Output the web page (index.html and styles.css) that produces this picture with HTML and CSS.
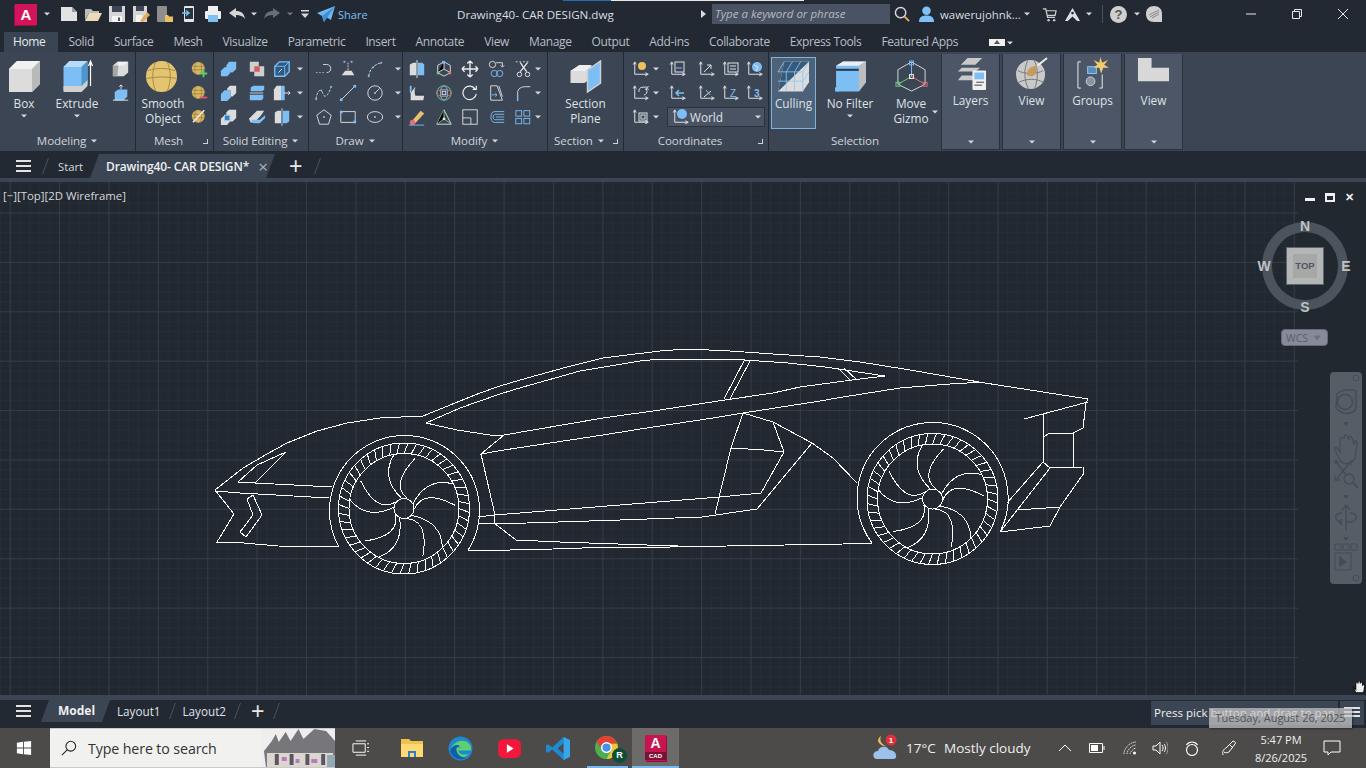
FILE: index.html
```html
<!DOCTYPE html>
<html lang="en">
<head>
<meta charset="utf-8">
<title>Drawing40- CAR DESIGN.dwg</title>
<link rel="stylesheet" href="styles.css">
</head>
<body>
<svg class="defs" aria-hidden="true">
  <symbol id="ucs" viewBox="0 0 24 24"><path d="M5 3V19H22M3 6L5 2.500L7 6M19 17L23 19L19 21" fill="none" stroke="#dfe3e8" stroke-width="1.300"/></symbol>
  <symbol id="ball" viewBox="0 0 24 24"><circle cx="11" cy="11" r="8.500" fill="#d8b763"/><path d="M3 8.500H19M2.500 13H19.500M8 3C6 8 6 15 8 19M14 3C16 8 16 15 14 19" stroke="#8f7434" fill="none" stroke-width=".8"/></symbol>
  <symbol id="chev" viewBox="0 0 8 8"><path d="M1 2.500H7L4 5.500Z" fill="#d5d8dc"/></symbol>
</svg>

<header class="titlebar">
  <div class="progress"><i class="pb"></i><i class="pw"></i></div>
  <div class="quick">
    <div class="logo">A</div>
    <span class="qa qa-logo"><svg class="c8"><use href="#chev"/></svg></span>
    <span class="qc"><svg viewBox="0 0 18 16" class="i18"><path d="M1 1H12L17 6V15H1Z" fill="#e3e3e3"/><path d="M12 1V6H17Z" fill="#9b9b9b"/></svg></span>
    <span class="qc"><svg viewBox="0 0 18 16" class="i18"><path d="M1 14V3H7L9 5H15V7H5L1 14Z" fill="#bbb"/><path d="M1 15L5 7H18L14 15Z" fill="#eadbb6"/></svg></span>
    <span class="qc"><svg viewBox="0 0 18 18" class="i18"><path d="M1 1H17V17H1Z" fill="#d5d5d5"/><path d="M4 1H14V7H4Z" fill="#3d4655"/><path d="M4 11H14V17H4Z" fill="#f4f4f4"/><path d="M10 12.500H12V16H10Z" fill="#555"/></svg></span>
    <span class="qc"><svg viewBox="0 0 18 18" class="i18"><path d="M1 1H15V17H1Z" fill="#d5d5d5"/><path d="M4 1H12V6H4Z" fill="#3d4655"/><path d="M4 10H10V17H4Z" fill="#f4f4f4"/><path d="M8 16L15 7L18 10L11 17Z" fill="#e5a95a"/></svg></span>
    <span class="qc"><svg viewBox="0 0 18 18" class="i18"><rect x="1" y="1" width="10" height="16" rx="1" fill="#8e8e8e"/><path d="M9 10H12L13 11.500H17V17H9Z" fill="#e8c05f"/></svg></span>
    <span class="qc"><svg viewBox="0 0 18 18" class="i18"><rect x="4" y="1" width="10" height="16" rx="1" fill="#e5e5e5"/><rect x="5" y="3" width="8" height="11" fill="#2a3340"/><path d="M2 8H8M6 5.500L9 8L6 10.500" stroke="#7ac0f7" stroke-width="1.500" fill="none"/></svg></span>
    <span class="qc"><svg viewBox="0 0 18 18" class="i18"><path d="M4 1H14V6H4Z" fill="#f0f0f0"/><rect x="1" y="6" width="16" height="8" rx="1" fill="#eee"/><path d="M4 10H14V17H4Z" fill="#7fc0f3"/></svg></span>
    <span class="qc"><svg viewBox="0 0 18 14" class="i18"><path d="M1 6L8 1V4C13 4 16 6 17 12C15 9 12 8 8 8V11Z" fill="#d5d5d5"/></svg></span>
    <span class="qa qa-s"><svg class="c8"><use href="#chev"/></svg></span>
    <span class="qc qc-r"><svg viewBox="0 0 18 14" class="i18"><path d="M17 6L10 1V4C5 4 2 6 1 12C3 9 6 8 10 8V11Z" fill="#666e78"/></svg></span>
    <span class="qa qa-s"><svg class="c8 dim"><use href="#chev"/></svg></span>
    <span class="qa qa-m"><svg viewBox="0 0 10 10" class="i10"><path d="M1 1H9V2.500H1ZM1 4.500H9L5 9Z" fill="#d5d8dc"/></svg></span>
    <svg viewBox="0 0 20 18" class="plane"><path d="M19 1L1 8L6 11L8 17L11 12.500L15 15Z" fill="#6fb6f2"/><path d="M19 1L6 11L8 17Z" fill="#3f8fd0"/></svg>
    <span class="share">Share</span>
  </div>
  <div class="doc">Drawing40- CAR DESIGN.dwg</div>
  <div class="search-arrow"></div>
  <div class="search">Type a keyword or phrase</div>
  <svg viewBox="0 0 18 18" class="lens"><circle cx="7" cy="7" r="5.500" fill="none" stroke="#d9d9d9" stroke-width="1.500"/><path d="M11 11L16 16" stroke="#d9b36a" stroke-width="2"/></svg>
  <svg viewBox="0 0 18 18" class="user"><circle cx="9" cy="5" r="4.500" fill="#7fc2f7"/><path d="M1 17C1 11 5 10 9 10S17 11 17 17Z" fill="#7fc2f7"/></svg>
  <span class="uname">wawerujohnk...</span>
  <span class="qa qa-u"><svg class="c8"><use href="#chev"/></svg></span>
  <svg viewBox="0 0 16 16" class="cart"><path d="M1 2H4L6 11H14M4.500 4H15L14 9H5.500" fill="none" stroke="#cfcfcf" stroke-width="1.300"/><circle cx="7" cy="14" r="1.300" fill="#cfcfcf"/><circle cx="13" cy="14" r="1.300" fill="#cfcfcf"/></svg>
  <svg viewBox="0 0 18 16" class="alogo"><path d="M9 1L1 15H4L9 10L14 15H17Z" fill="#e0e0e0"/><circle cx="9" cy="6.500" r="1.400" fill="#222933"/></svg>
  <span class="qa qa-a"><svg class="c8"><use href="#chev"/></svg></span>
  <i class="vsep"></i>
  <div class="help">?</div>
  <span class="qa qa-h"><svg class="c8"><use href="#chev"/></svg></span>
  <svg viewBox="0 0 16 16" class="cloudb"><path d="M8 0C13 0 16 3 16 8V16H8C3 16 0 13 0 8S3 0 8 0Z" fill="#cfcfcf"/><path d="M3 9L13 4M4 11L13 6M6 12L13 8" stroke="#777" stroke-width=".8"/></svg>
  <div class="winbtns">
    <svg viewBox="0 0 12 12" class="w12"><path d="M1 6H11" stroke="#e6e6e6"/></svg>
    <svg viewBox="0 0 12 12" class="w12"><path d="M1.500 3.500H8.500V10.500H1.500ZM3.500 3.500V1.500H10.500V8.500H8.500" fill="none" stroke="#e6e6e6"/></svg>
    <svg viewBox="0 0 12 12" class="w12"><path d="M1 1L11 11M11 1L1 11" stroke="#e6e6e6"/></svg>
  </div>
</header>

<nav class="tabs">
  <span class="tab on">Home</span><span class="tab">Solid</span><span class="tab">Surface</span><span class="tab">Mesh</span><span class="tab">Visualize</span><span class="tab">Parametric</span><span class="tab">Insert</span><span class="tab">Annotate</span><span class="tab">View</span><span class="tab">Manage</span><span class="tab">Output</span><span class="tab">Add-ins</span><span class="tab">Collaborate</span><span class="tab">Express Tools</span><span class="tab">Featured Apps</span>
  <span class="collapse"><i></i></span><svg class="c8"><use href="#chev"/></svg>
</nav>

<section class="ribbon">
  <div class="panel p-model">
    <div class="body">
      <div class="big b-box"><svg viewBox="0 0 33 33" class="i33"><path d="M1 9L9 1H32V24L24 32H1Z" fill="#dcdcdc"/><path d="M24 9H1L9 1H32Z" fill="#f1f1f1"/><path d="M24 9L32 1V24L24 32Z" fill="#b9b9b9"/></svg><span>Box</span><svg class="c8 ba"><use href="#chev"/></svg></div>
      <div class="big b-ext"><svg viewBox="0 0 30 33" class="i33"><path d="M1 7L7 1H25V24L19 30H1Z" fill="#7dbef5"/><path d="M19 7H1L7 1H25Z" fill="#b6dcfa"/><path d="M19 7L25 1V24L19 30Z" fill="#4f95d0"/><path d="M1 26H19L25 20V26L19 32H1Z" fill="#d0d0d0"/><path d="M28 26V2M26 6L28 1L30 6" stroke="#fff" fill="none" stroke-width="1.200"/></svg><span>Extrude</span><svg class="c8 ba"><use href="#chev"/></svg></div>
      <div class="col">
        <span class="s"><svg viewBox="0 0 20 20" class="i20"><path d="M1 6L6 2H18V14L13 18H1Z" fill="#dcdcdc"/><path d="M1 6V18H6L7 6Z" fill="#a5a5a5"/><path d="M6 2H18L13 6H7Z" fill="#f1f1f1"/></svg></span>
        <span class="s"><svg viewBox="0 0 20 20" class="i20"><path d="M3 9L7 6H17V14L13 18H3Z" fill="#7dbef5"/><path d="M10 6V1M8 3L10 1L12 3M1 18H18" stroke="#e8e8e8" fill="none"/></svg></span>
      </div>
    </div>
    <div class="plabel">Modeling <svg class="c8"><use href="#chev"/></svg></div>
  </div>

  <div class="panel p-mesh">
    <div class="body">
      <div class="big b-smooth"><svg viewBox="0 0 34 34" class="i33"><circle cx="17" cy="17" r="16" fill="#e3c470"/><path d="M3 11C12 8 22 8 31 11M1.500 19C12 17 22 17 32.500 19M11 2C7 12 7 22 11 32M23 2C27 12 27 22 23 32" stroke="#a88a3f" fill="none"/></svg><span>Smooth<br>Object</span></div>
      <div class="col">
        <span class="s"><svg class="i20" viewBox="0 0 24 24"><use href="#ball"/><path d="M13 18H23M18 13V23" stroke="#5ccb6c" stroke-width="2.500"/></svg></span>
        <span class="s"><svg class="i20" viewBox="0 0 24 24"><use href="#ball"/><path d="M13 18H23" stroke="#e0576a" stroke-width="2.500"/></svg></span>
        <span class="s"><svg class="i20" viewBox="0 0 24 24"><use href="#ball"/><path d="M4 19L19 3" stroke="#eee" stroke-width="2"/></svg></span>
      </div>
    </div>
    <div class="plabel pl-mesh">Mesh <i class="launch"></i></div>
  </div>

  <div class="panel p-solid">
    <div class="body grid g-solid">
      <span class="s"><svg class="i20" viewBox="0 0 20 20"><path d="M1 12L5 8H11V15L8 18H1ZM7 6L10 2H18V10L14 14H11V8H7Z" fill="#7dbef5"/></svg></span>
      <span class="s"><svg class="i20" viewBox="0 0 20 20"><path d="M2 2H12V7H18V18H7V13H2Z" fill="#cfcfcf"/><path d="M7 7H13V13H7Z" fill="#d95a5a"/></svg></span>
      <span class="s"><svg class="i20" viewBox="0 0 20 20"><path d="M2 7L7 2H18V13L13 18H2Z" fill="#2f5a82" stroke="#7dbef5" stroke-width="1.500"/><path d="M2 7H13V18M13 7L18 2" stroke="#7dbef5" fill="none"/><path d="M6 14L10 10" stroke="#eee"/></svg></span>
      <span class="s"><svg class="c8"><use href="#chev"/></svg></span>
      <span class="s"><svg class="i20" viewBox="0 0 20 20"><path d="M1 11L5 7H12V15L8 19H1Z" fill="#7dbef5"/><path d="M8 5L11 2H18V10L14 14H12V7H8Z" fill="#dcdcdc"/></svg></span>
      <span class="s"><svg class="i20" viewBox="0 0 20 20"><path d="M3 4L6 2H18V6L16 8H3Z" fill="#7dbef5"/><path d="M2 10H17" stroke="#dcdcdc"/><path d="M2 12H17V16L15 18H2Z" fill="#7dbef5"/></svg></span>
      <span class="s"><svg class="i20" viewBox="0 0 20 20"><path d="M1 6L4 2H9V18H1Z" fill="#dcdcdc"/><path d="M9 2H13V18H9Z" fill="#7dbef5"/><path d="M12 10H19M17 8L19 10L17 12" stroke="#eee" fill="none"/></svg></span>
      <span class="s"><svg class="c8"><use href="#chev"/></svg></span>
      <span class="s"><svg class="i20" viewBox="0 0 20 20"><path d="M7 5L10 2H18V11L14 15H11V8H7ZM1 12L5 8H11V15L8 19H1Z" fill="#dcdcdc"/><rect x="5" y="8" width="6" height="6" fill="#3b7fb8" stroke="#9ed0f7"/></svg></span>
      <span class="s"><svg class="i20" viewBox="0 0 20 20"><path d="M1 12L10 3H18L14 9L7 16H3Z" fill="#dcdcdc"/><path d="M3 13H13L19 8V11L13 17H6Z" fill="#7dbef5"/></svg></span>
      <span class="s"><svg class="i20" viewBox="0 0 20 20"><path d="M2 5L5 3H9V17H2Z" fill="#dcdcdc"/><path d="M11 3H18V15L15 17H11Z" fill="#7dbef5"/><path d="M10 0V20" stroke="#9ed0f7"/></svg></span>
      <span class="s"><svg class="c8"><use href="#chev"/></svg></span>
    </div>
    <div class="plabel">Solid Editing <svg class="c8"><use href="#chev"/></svg></div>
  </div>

  <div class="panel p-draw">
    <div class="body grid g-draw">
      <span class="s"><svg class="i20" viewBox="0 0 20 20"><path d="M9 5H13C19 5 19 14 13 14" fill="none" stroke="#dfe3e8"/><path d="M1 14H10" fill="none" stroke="#7dbef5" stroke-dasharray="2 1.500"/></svg></span>
      <span class="s"><svg class="i20" viewBox="0 0 20 20"><path d="M3 17H17L14 12H7Z" fill="#dcdcdc"/><path d="M10 3V13" stroke="#dcdcdc" stroke-dasharray="2 1"/><rect x="5" y="1" width="2" height="2" fill="#7dbef5"/><rect x="13" y="1" width="2" height="2" fill="#7dbef5"/></svg></span>
      <span class="s"><svg class="i20" viewBox="0 0 20 20"><path d="M3 18C4 10 9 5 17 3" fill="none" stroke="#dfe3e8" stroke-dasharray="3 1.500"/><circle cx="3" cy="18" r="1.100" fill="#7dbef5"/><circle cx="17" cy="3" r="1.100" fill="#7dbef5"/><circle cx="8" cy="8" r="1.100" fill="#7dbef5"/></svg></span>
      <span class="s"><svg class="c8"><use href="#chev"/></svg></span>
      <span class="s"><svg class="i20" viewBox="0 0 20 20"><path d="M1 17C3 5 7 5 9 11S15 12 18 3" fill="none" stroke="#dfe3e8" stroke-dasharray="3 1.500"/><circle cx="1.500" cy="17" r="1" fill="#7dbef5"/><circle cx="18" cy="3" r="1" fill="#7dbef5"/><circle cx="7" cy="7" r="1" fill="#7dbef5"/></svg></span>
      <span class="s"><svg class="i20" viewBox="0 0 20 20"><path d="M3 17L17 3" stroke="#dfe3e8"/><rect x="1" y="16" width="3" height="3" fill="#7dbef5"/><rect x="16" y="1" width="3" height="3" fill="#7dbef5"/></svg></span>
      <span class="s"><svg class="i20" viewBox="0 0 20 20"><circle cx="10" cy="10" r="8" fill="none" stroke="#dfe3e8"/><path d="M10 10L15 5" stroke="#dfe3e8"/><circle cx="10" cy="10" r="1.200" fill="#7dbef5"/></svg></span>
      <span class="s"><svg class="c8"><use href="#chev"/></svg></span>
      <span class="s"><svg class="i20" viewBox="0 0 20 20"><path d="M10 2L18 8L15 18H5L2 8Z" fill="none" stroke="#dfe3e8"/><circle cx="10" cy="10" r="1.200" fill="#7dbef5"/></svg></span>
      <span class="s"><svg class="i20" viewBox="0 0 20 20"><path d="M2 4H18V16H2Z" fill="none" stroke="#dfe3e8"/><rect x="1" y="3" width="3" height="3" fill="#7dbef5"/><rect x="16" y="14" width="3" height="3" fill="#7dbef5"/></svg></span>
      <span class="s"><svg class="i20" viewBox="0 0 20 20"><ellipse cx="10" cy="10" rx="8.500" ry="6" fill="none" stroke="#dfe3e8"/><circle cx="10" cy="10" r="1.200" fill="#7dbef5"/></svg></span>
      <span class="s"><svg class="c8"><use href="#chev"/></svg></span>
    </div>
    <div class="plabel">Draw <svg class="c8"><use href="#chev"/></svg></div>
  </div>

  <div class="panel p-modify">
    <div class="body grid g-modify">
      <span class="s"><svg class="i20" viewBox="0 0 20 20"><path d="M2 5L6 3H9V17H2Z" fill="#dcdcdc"/><path d="M11 3H16L18 5V17H11Z" fill="#7dbef5"/><path d="M10 0V20" stroke="#eee"/></svg></span>
      <span class="s"><svg class="i20" viewBox="0 0 20 20"><path d="M10 2L17 6V14L10 18L3 14V6Z" fill="none" stroke="#dfe3e8"/><path d="M10 2V10L3 14M10 10L17 14" stroke="#dfe3e8"/><rect x="8" y="1" width="3" height="3" fill="#7dbef5"/><rect x="2" y="13" width="3" height="3" fill="#6ad07a"/><rect x="15" y="13" width="3" height="3" fill="#e0707a"/></svg></span>
      <span class="s"><svg class="i20" viewBox="0 0 20 20"><path d="M10 1V19M1 10H19M10 1L7 4M10 1L13 4M10 19L7 16M10 19L13 16M1 10L4 7M1 10L4 13M19 10L16 7M19 10L16 13" stroke="#eee" stroke-width="1.500" fill="none"/></svg></span>
      <span class="s"><svg class="i20" viewBox="0 0 20 20"><circle cx="5" cy="5" r="3.500" fill="none" stroke="#dfe3e8"/><path d="M9 3H16V7M14 6L16 8L18 6" fill="none" stroke="#dfe3e8"/><circle cx="7" cy="15" r="3.500" fill="none" stroke="#7dbef5"/><circle cx="13" cy="15" r="3.500" fill="none" stroke="#7dbef5"/></svg></span>
      <span class="s"><svg class="i20" viewBox="0 0 20 20"><path d="M2 2H18" stroke="#dfe3e8" stroke-dasharray="2 2"/><path d="M7 3L14 13M15 3L7 13" stroke="#eee" stroke-width="1.400"/><circle cx="6" cy="16" r="2.500" fill="none" stroke="#eee"/><circle cx="15" cy="16" r="2.500" fill="none" stroke="#eee"/></svg></span>
      <span class="s"><svg class="c8"><use href="#chev"/></svg></span>
      <span class="s"><svg class="i20" viewBox="0 0 20 20"><path d="M3 10L8 3V13H18L17 18H3Z" fill="#dcdcdc"/><path d="M3 10V2" stroke="#7dbef5" stroke-width="2"/><path d="M8 5V11H17" fill="none" stroke="#2b3340"/></svg></span>
      <span class="s"><svg class="i20" viewBox="0 0 20 20"><circle cx="10" cy="10" r="8" fill="none" stroke="#6ad07a"/><ellipse cx="10" cy="10" rx="8" ry="4" fill="none" stroke="#e0707a"/><ellipse cx="10" cy="10" rx="4" ry="8" fill="none" stroke="#7dbef5"/><rect x="8" y="8" width="4" height="4" fill="none" stroke="#eee"/></svg></span>
      <span class="s"><svg class="i20" viewBox="0 0 20 20"><path d="M16 6A7.500 7.500 0 1 0 17 11M13 6H17V2" fill="none" stroke="#eee" stroke-width="1.300"/></svg></span>
      <span class="s"><svg class="i20" viewBox="0 0 20 20"><path d="M3 2H10L16 18H3Z" fill="none" stroke="#dfe3e8"/><path d="M12 2L16 14" stroke="#dfe3e8"/><path d="M4 12H10M8 10L10 12L8 14" stroke="#7dbef5" fill="none"/></svg></span>
      <span class="s"><svg class="i20" viewBox="0 0 20 20"><path d="M4 19V10C4 5 8 3 13 3H18" fill="none" stroke="#dfe3e8"/><path d="M4 19V12" stroke="#7dbef5" stroke-width="1.500"/></svg></span>
      <span class="s"><svg class="c8"><use href="#chev"/></svg></span>
      <span class="s"><svg class="i20" viewBox="0 0 20 20"><path d="M4 15L14 3L18 6L8 17Z" fill="#e6c172"/><circle cx="5" cy="16" r="3" fill="#e0707a"/><path d="M1 19H18" stroke="#7dbef5"/></svg></span>
      <span class="s"><svg class="i20" viewBox="0 0 20 20"><path d="M10 2L18 18H2Z" fill="none" stroke="#dfe3e8"/><path d="M10 2L10 12L2 18M10 12L18 18" stroke="#6ad07a"/><circle cx="10" cy="12" r="1.500" fill="#eee"/></svg></span>
      <span class="s"><svg class="i20" viewBox="0 0 20 20"><rect x="2" y="2" width="16" height="16" fill="none" stroke="#dfe3e8"/><path d="M2 11H11V18" stroke="#dfe3e8" fill="none"/></svg></span>
      <span class="s"><svg class="i20" viewBox="0 0 20 20"><path d="M18 4H7C2 4 2 16 7 16H18M18 7H8C5 7 5 13 8 13H18M18 10H9" fill="none" stroke="#7dbef5"/></svg></span>
      <span class="s"><svg class="i20" viewBox="0 0 20 20"><rect x="2" y="3" width="6.500" height="6" fill="none" stroke="#7dbef5"/><rect x="11" y="3" width="6.500" height="6" fill="none" stroke="#7dbef5"/><rect x="2" y="11.500" width="6.500" height="6" fill="none" stroke="#7dbef5"/><rect x="11" y="11.500" width="6.500" height="6" fill="none" stroke="#7dbef5"/></svg></span>
      <span class="s"><svg class="c8"><use href="#chev"/></svg></span>
    </div>
    <div class="plabel">Modify <svg class="c8"><use href="#chev"/></svg></div>
  </div>

  <div class="panel p-section">
    <div class="body">
      <div class="big b-sect"><svg viewBox="0 0 32 33" class="i33"><path d="M1 11L10 5H22V18L15 23H1Z" fill="#dcdcdc"/><path d="M1 11H16L22 5H10Z" fill="#efefef"/><path d="M18 10L31 1V23L18 32Z" fill="#7dbef5" stroke="#cfcfcf" stroke-width="1.500"/></svg><span>Section<br>Plane</span></div>
    </div>
    <div class="plabel pl-sect">Section <svg class="c8"><use href="#chev"/></svg><i class="launch"></i></div>
  </div>

  <div class="panel p-coord">
    <div class="body grid g-coord">
      <span class="s"><svg class="i20"><use href="#ucs"/><circle cx="11" cy="6" r="4" fill="#edc15d"/></svg></span>
      <span class="s"><svg class="c8"><use href="#chev"/></svg></span>
      <span class="s"><svg class="i20"><use href="#ucs"/><rect x="7" y="2" width="9" height="10" fill="none" stroke="#dfe3e8"/><path d="M8 8H14" stroke="#7dbef5"/></svg></span>
      <span class="s"><svg class="i20"><use href="#ucs"/><path d="M7 12L14 5M10 5H14V9" stroke="#dfe3e8" fill="none"/></svg></span>
      <span class="s"><svg class="i20"><use href="#ucs"/><rect x="7" y="3" width="10" height="9" fill="none" stroke="#dfe3e8"/><path d="M9 6H15M9 9H15" stroke="#dfe3e8"/></svg></span>
      <span class="s"><svg class="i20"><use href="#ucs"/><circle cx="12" cy="7" r="5" fill="#7dbef5"/><path d="M9 5L13 7L11 11" stroke="#e9ecef" fill="none"/></svg></span>
      <span class="s"><svg class="i20"><use href="#ucs"/><path d="M8 8A4 4 0 1 1 13 11" fill="none" stroke="#dfe3e8"/><text x="14" y="6" class="mini">x</text></svg></span>
      <span class="s"><svg class="c8"><use href="#chev"/></svg></span>
      <span class="s"><svg class="i20"><use href="#ucs"/><path d="M16 9H8M11 6L8 9L11 12" stroke="#7dbef5" fill="none" stroke-width="1.500"/></svg></span>
      <span class="s"><svg class="i20"><use href="#ucs"/><path d="M7 13L14 7" stroke="#dfe3e8"/><path d="M9 6L13 11" stroke="#7dbef5"/></svg></span>
      <span class="s"><svg class="i20"><use href="#ucs"/><text x="9" y="13" class="mini big-m">Z</text></svg></span>
      <span class="s"><svg class="i20"><use href="#ucs"/><text x="9" y="13" class="mini big-b">3</text></svg></span>
      <span class="s"><svg class="i20"><use href="#ucs"/><rect x="8" y="5" width="8" height="8" fill="none" stroke="#dfe3e8"/><rect x="10" y="7" width="4" height="4" fill="none" stroke="#dfe3e8"/></svg></span>
      <span class="s"><svg class="c8"><use href="#chev"/></svg></span>
      <div class="combo"><svg class="i18c"><use href="#ucs"/><circle cx="11" cy="6" r="5" fill="#7dbef5"/></svg><span>World</span><svg class="c8 carr"><use href="#chev"/></svg></div>
    </div>
    <div class="plabel pl-coord">Coordinates <i class="launch"></i></div>
  </div>

  <div class="panel p-select">
    <div class="body">
      <div class="big b-cull"><svg viewBox="0 0 32 31" class="i33"><path d="M1 30L7 1H31V21L25 30Z" fill="#dcdcdc"/><path d="M1 30L7 1H31L1 30Z" fill="#355a7a"/><path d="M1 11H25V30M1 20H25M9 11V30M17 11V30M25 11L31 1M17 11L23 1M9 11L15 1M1 11L7 1M25 20L31 11" fill="none" stroke="#8cc7f5" stroke-width=".8"/></svg><span>Culling</span></div>
      <div class="big b-filter"><svg viewBox="0 0 32 31" class="i33"><path d="M2 5L9 1H31V21L24 30H2Z" fill="#7dbef5"/><path d="M2 5H24L31 1H9Z" fill="#eee"/><path d="M24 5L31 1V21L24 30Z" fill="#bdbdbd"/><path d="M2 8H24V10H2Z" fill="#213a52"/><rect x="1" y="26" width="4" height="4" fill="#7dbef5"/></svg><span>No Filter</span><svg class="c8 ba"><use href="#chev"/></svg></div>
      <div class="big b-gizmo"><svg viewBox="0 0 34 34" class="i33"><path d="M17 2L31 10V25L17 32L3 25V10Z" fill="none" stroke="#d5d8dc"/><path d="M17 2V17" stroke="#7dbef5"/><path d="M17 17L3 25" stroke="#6ad07a"/><path d="M17 17L31 25" stroke="#e0707a"/><rect x="15" y="1" width="4" height="4" fill="none" stroke="#7dbef5"/><rect x="15" y="15" width="4" height="4" fill="none" stroke="#eee"/><rect x="1" y="23" width="4" height="4" fill="none" stroke="#6ad07a"/><rect x="29" y="23" width="4" height="4" fill="none" stroke="#e0707a"/></svg><span>Move<br>Gizmo</span><svg class="c8 gz"><use href="#chev"/></svg></div>
    </div>
    <div class="plabel">Selection</div>
  </div>

  <div class="slides">
    <div class="slide"><svg viewBox="0 0 34 34" class="i33"><path d="M7 8L14 1H29L22 8ZM4 15L8 11H27L22 15ZM4 24L8 19H21V24Z" fill="#c9c9c9"/><rect x="19" y="14" width="14" height="20" rx="1" fill="#f0f0f0"/><rect x="21" y="16" width="10" height="7" fill="#7dbef5"/><path d="M23 26H31M21 29H29" stroke="#444"/></svg><span>Layers</span><svg class="c8 sa"><use href="#chev"/></svg></div>
    <div class="slide"><svg viewBox="0 0 34 34" class="i33"><circle cx="16" cy="18" r="15" fill="#c9c9c9"/><path d="M3 14C10 18 22 18 29 14M4 26C12 22 22 22 29 26M13 4C9 12 9 24 14 33M20 4C24 12 24 24 20 33" stroke="#777" fill="none"/><path d="M12 18C13 11 18 9 23 9L21 18C17 21 14 20 12 18Z" fill="#c79a5f"/><path d="M23 9L33 1" stroke="#eee" stroke-width="2"/></svg><span>View</span><svg class="c8 sa"><use href="#chev"/></svg></div>
    <div class="slide"><svg viewBox="0 0 34 34" class="i33"><path d="M5 5H2V32H5M24 32H27V18" fill="none" stroke="#eee"/><rect x="12" y="10" width="9" height="7" fill="#5b8cb8" stroke="#8cc7f5"/><circle cx="15" cy="25" r="4.500" fill="#8b93a0" stroke="#ccc"/><path d="M25 0L27 6L33 3L29 8L34 11L28 11L26 17L24 11L18 11L22 8L18 3L24 6Z" fill="#f3cd6c"/></svg><span>Groups</span><svg class="c8 sa"><use href="#chev"/></svg></div>
    <div class="slide"><svg viewBox="0 0 34 34" class="i33"><path d="M1 1H15V11H33V25H1Z" fill="#d8d8d8"/></svg><span>View</span><svg class="c8 sa"><use href="#chev"/></svg></div>
  </div>
</section>

<div class="filetabs">
  <div class="burger"><i></i><i></i><i></i></div>
  <i class="slash"></i>
  <span class="ft">Start</span>
  <div class="ft-active"><span>Drawing40- CAR DESIGN*</span><em>×</em></div>
  <span class="plus">+</span>
  <i class="slash"></i>
</div>
<div class="sep4"></div>

<main class="viewport">
  <div class="gridlayer"></div>
  <svg class="car" viewBox="0 182 1366 513" aria-label="car wireframe">
    <defs>
      <g id="h1"><path d="M0-55L4-65.500"/></g>
      <g id="h4"><use href="#h1"/><use href="#h1" transform="rotate(7.500)"/><use href="#h1" transform="rotate(15)"/><use href="#h1" transform="rotate(22.500)"/></g>
      <g id="h12"><use href="#h4"/><use href="#h4" transform="rotate(30)"/><use href="#h4" transform="rotate(60)"/></g>
      <g id="blade"><path d="M-2.300-10Q-24-31-10-54"/><path d="M3.300-10Q-14-24 11-50"/></g>
      <g id="wheel">
        <circle r="65.500"/><circle r="55"/><circle r="10"/>
        <use href="#h12"/><use href="#h12" transform="rotate(90)"/><use href="#h12" transform="rotate(180)"/><use href="#h12" transform="rotate(270)"/>
        <use href="#blade"/><use href="#blade" transform="rotate(74)"/><use href="#blade" transform="rotate(146)"/><use href="#blade" transform="rotate(218)"/><use href="#blade" transform="rotate(290)"/>
      </g>
    </defs>
    <use href="#wheel" x="404" y="508.500"/>
    <use href="#wheel" x="932.500" y="499"/>
    <path d="M339 547A75 75 0 1 1 468 550.500"/>
    <path d="M872 543A75.500 75.500 0 1 1 1000 532"/>
    <!-- body top -->
    <path d="M215 490L243 468L267 454L287 443L317 431L347 423L380 418L423 416L460 401L480 393L500 386L520 380L567 367L603 358L660 351L687 349L730 351L773 354L820 357L860 362L910 370L985 383L1088 399L1086 403L1083 428L1073 433"/>
    <path d="M426 423L460 408L480 401L500 394L523 387L580 371L640 361L660 359L730 359L788 363L825 367L885 376L852 380L800 387L773 393L725 400L660 410L603 418L504 435L490 435L457 430L426 423Z"/>
    <path d="M745 359L724 399M750 361L730 399M838 368L851 381M844 368L857 380"/>
    <path d="M504 435L481 454L504 450L603 435L653 427L713 418L743 413L820 401L843 397L900 388L950 384L985 382"/>
    <!-- nose -->
    <path d="M215 490L234 514L217 542L232 542L278 546L339 547"/>
    <path d="M215 491L240 493L329 498M238 482L255 483L332 487M238 482L257 465L286 452L255 483"/>
    <path d="M247 499L253 495L262 515L246 537L240 532L253 515Z"/>
    <!-- rocker -->
    <path d="M481 454L495 515L494 523L516 540L560 542L647 545L678 546"/>
    <path d="M478 517L495 515L720 497L761 493M478 524L527 523L620 520L702 517L757 509"/>
    <path d="M468 551L553 549L612 547L670 547L727 546L785 545L843 544L872 543"/>
    <!-- side intake -->
    <path d="M743 413L731 448L715 514M731 448L764 450L784 452M743 413L773 422L812 443L757 509M773 422L784 452L761 493"/>
    <path d="M812 443L833 458L857 483"/>
    <!-- rear -->
    <path d="M1024 419L1088 402M1043 413V462M1073 433H1050L1043 437M1073 433V467"/>
    <path d="M1043 462L1050 468L1083 467L1084 473L1060 507L1050 526L1000 532M1043 462L1007 503M1050 468L1000 532M1017 510L1060 507"/>
  </svg>

  <div class="vplabel">[−][Top][2D Wireframe]</div>
  <div class="vpctl"><i class="vmin"></i><i class="vmax"></i><em>✕</em></div>

  <div class="cube">
    <div class="ring"></div>
    <div class="face"><div class="inner">TOP</div></div>
    <b class="d n">N</b><b class="d s-d">S</b><b class="d w">W</b><b class="d e">E</b>
  </div>
  <div class="wcs">WCS <svg viewBox="0 0 8 8" class="i10"><path d="M1 2H7L4 6Z" fill="#6d7080"/></svg></div>

  <div class="navbar">
    <svg viewBox="0 0 32 212" class="navsvg">
      <circle cx="26" cy="6" r="3" fill="none" stroke="#454c56"/>
      <path d="M7 22C12 17 22 17 26 19V37C22 43 12 43 6 36Z" fill="none" stroke="#454c56" stroke-width="1.500"/>
      <circle cx="15" cy="30" r="7.500" fill="none" stroke="#454c56" stroke-width="1.500"/>
      <path d="M13 50H19L16 54Z" fill="#454c56"/>
      <path d="M5 78L10 88C12 93 22 93 25 86L27 72C27 68 25 68 24 72L22 66C21 63 19 64 19 67L17 64C16 62 14 63 14 66L12 66C11 65 10 66 10 69V80L7 76C5 74 4 76 5 78Z" fill="none" stroke="#454c56" stroke-width="1.300"/>
      <path d="M6 108L20 90M6 90L17 104M4 90H9M6 87V92M21 88V93M5 103V108H10" stroke="#454c56" fill="none" stroke-width="1.300"/>
      <circle cx="19" cy="107" r="5" fill="none" stroke="#454c56" stroke-width="1.300"/><path d="M23 111L28 116" stroke="#454c56" stroke-width="2"/>
      <path d="M13 123H19L16 127Z" fill="#454c56"/>
      <path d="M16 133V158M12 138L16 133L20 138M12 150H10C3 147 5 141 12 141M20 141C27 141 29 147 22 150H15M12 147L9 150L12 153" fill="none" stroke="#454c56" stroke-width="1.300"/>
      <path d="M13 165H19L16 169Z" fill="#454c56"/>
      <path d="M5 172H11V178H5ZM13 172H19V178H13ZM21 172H27V178H21ZM5 181H21V198H5Z" fill="none" stroke="#454c56"/>
      <path d="M9 184L17 190L9 195Z" fill="#454c56"/>
      <circle cx="26" cy="206" r="3" fill="none" stroke="#454c56"/>
    </svg>
  </div>
</main>

<div class="sep5"></div>
<div class="layoutbar">
  <div class="burger"><i></i><i></i><i></i></div>
  <div class="lt-model">Model</div>
  <span class="lt">Layout1</span><i class="slash"></i><span class="lt lt2">Layout2</span><i class="slash"></i>
  <span class="plus p2">+</span><i class="slash"></i>
  <div class="status">Press pick button and drag to pan</div>
  <div class="burger b2"><i></i><i></i><i></i></div>
  <svg viewBox="0 0 14 14" class="hand"><path d="M3 8L5 12H12L13 6C13 4 11 4 11 6V4C11 2 9 2 9 4V3C9 1 7 1 7 3V4C7 2 5 2 5 4V9L3 7C2 6 2 7 3 8Z" fill="#eee" stroke="#111"/></svg>
</div>

<footer class="taskbar">
  <svg viewBox="0 0 18 18" class="start"><path d="M1 3L8 2V8.500H1ZM9 2L17 1V8.500H9ZM1 9.500H8V16L1 15ZM9 9.500H17V17L9 16Z" fill="#fff"/></svg>
  <div class="tsearch">
    <svg viewBox="0 0 18 18" class="tlens"><circle cx="11" cy="7" r="5.500" fill="none" stroke="#222" stroke-width="1.200"/><path d="M7 11L1 17" stroke="#222" stroke-width="1.200"/></svg>
    <span>Type here to search</span>
    <svg viewBox="0 0 74 38" class="thumb" preserveAspectRatio="none"><path d="M0 0H74V38H0Z" fill="#efeeec"/><path d="M2 22L10 12L14 5L17 13L24 3L29 12L37 0L42 10L53 0L65 2L74 12V38H4Z" fill="#77767a"/><path d="M5 24H72V38H5Z" fill="#dcd6d0"/><path d="M13 25H17V36H13ZM28 25H32V36H28ZM44 25H48V36H44ZM60 25H64V36H60Z" fill="#5b5660"/><path d="M20 28H25V32H20ZM50 30H56V34H50ZM34 30H38V34H34Z" fill="#b77bc0"/><path d="M66 26H74V38H66Z" fill="#93a9b5"/></svg>
  </div>
  <svg viewBox="0 0 18 18" class="tview"><path d="M4 1H15M1 4H14V13H1ZM4 16H15M16 4H18M16 8H18M16 12H18" fill="none" stroke="#fff"/></svg>
  <span class="tb tb1"><svg viewBox="0 0 22 22" class="t22"><path d="M0 2H8L10 4H22V20H0Z" fill="#f0c14b"/><path d="M0 7H22V20H0Z" fill="#ffd971"/><path d="M7 20V14H15V20H13V16H9V20Z" fill="#2a7fd4"/></svg></span>
  <span class="tb"><svg viewBox="0 0 24 24" class="t24"><circle cx="12" cy="12" r="11.500" fill="#1e88d0"/><path d="M2 15C3 7 11 3 17 5C21 7 23 11 22 14H10C10 17 14 19 20 17C16 22 8 22 5 18C4 14 8 10 13 11C9 8 4 10 2 15Z" fill="#5fd070"/><path d="M8 12C8 17 12 21 18 21C12 24 4 22 2 14C4 9 8 8 11 9C9 10 8 11 8 12Z" fill="#0d5fa8"/></svg></span>
  <span class="tb"><svg viewBox="0 0 24 24" class="t24"><rect x="1" y="3" width="22" height="18" rx="5" fill="#f3173b"/><path d="M9.500 8L16 12L9.500 16Z" fill="#fff"/></svg></span>
  <span class="tb"><svg viewBox="0 0 24 24" class="t24"><path d="M17 1L23 4V20L17 23L6 13L2 16L0 15V9L2 8L6 11ZM17 7L11 12L17 17Z" fill="#1f8ad2"/><path d="M17 1L23 4V20L17 23Z" fill="#3aa6ea"/></svg></span>
  <span class="tb tb-chrome"><svg viewBox="0 0 26 26" class="t24"><circle cx="12" cy="12" r="12" fill="#4cae50"/><path d="M12 0A12 12 0 0 1 23 8H12C8 8 6 10 5 12L2 5C4 2 8 0 12 0Z" fill="#e34133"/><path d="M23 8A12 12 0 0 1 12 24L17 15C18 13 17 10 15 8Z" fill="#f5c62c"/><circle cx="12" cy="12" r="5" fill="#4a8fe8" stroke="#fff" stroke-width="1.500"/></svg><b class="avatar">R</b></span>
  <span class="tb tb-acad"><span class="acad"><b>A</b><small>CAD</small></span></span>
  <div class="tray">
    <svg viewBox="0 0 28 28" class="wx"><path d="M9 3A7 7 0 0 0 15 13C11 14 7 11 6 8C6 6 7 4 9 3Z" fill="#efbd5a"/><path d="M5 26C0 26 0 18 6 18C7 13 15 12 17 17C24 16 27 26 21 26Z" fill="#9cc2ec"/><circle cx="19" cy="7" r="5.500" fill="#e0313a"/></svg>
    <b class="badge">1</b>
    <span class="temp">17°C</span>
    <span class="cond">Mostly cloudy</span>
    <svg viewBox="0 0 14 8" class="tup"><path d="M1 7L7 1L13 7" fill="none" stroke="#fff"/></svg>
    <svg viewBox="0 0 16 10" class="tbat"><path d="M.5 .5H13.500V9.500H.5ZM15 3V7" fill="none" stroke="#fff"/><path d="M2 2H9V8H2Z" fill="#fff"/></svg>
    <svg viewBox="0 0 14 14" class="twifi"><path d="M1 13C1 7 7 1 13 1M4 13C4 9 9 4 13 4M7 13C7 11 11 7 13 7" fill="none" stroke="#ddd" stroke-dasharray="1.500 .7"/><circle cx="11.500" cy="12" r="1.500" fill="#fff"/></svg>
    <svg viewBox="0 0 16 14" class="tspk"><path d="M1 5H4L8 1V13L4 9H1Z" fill="none" stroke="#fff"/><path d="M10 4C11.500 6 11.500 8 10 10M12 3C14 5 14 9 12 11" fill="none" stroke="#fff"/><path d="M14.500 1C16.500 5 16.500 9 14.500 13" fill="none" stroke="#999"/></svg>
    <svg viewBox="0 0 14 16" class="tring"><circle cx="7" cy="10" r="5.500" fill="none" stroke="#fff" stroke-width="1.200"/><path d="M1.500 5C4 1 10 1 12.500 5" fill="none" stroke="#fff" stroke-width="1.200"/></svg>
    <svg viewBox="0 0 16 16" class="tpen"><path d="M2 15C1 11 3 9 5 8L12 1C14 1 15 3 14 4L8 12C6 13 4 13 3 12M8 4L12 8" fill="none" stroke="#fff"/></svg>
    <div class="clock">5:47 PM<br>8/26/2025</div>
    <svg viewBox="0 0 18 16" class="tnote"><path d="M1 1H17V12H8L5 15V12H1Z" fill="none" stroke="#fff"/></svg>
  </div>
  <div class="tiptime">Tuesday, August 26, 2025</div>
</footer>
</body>
</html>
```
FILE: styles.css
```css
* { box-sizing: border-box; }
html, body { margin: 0; padding: 0; }
body {
  width: 1366px; height: 768px; overflow: hidden;
  display: flex; flex-direction: column;
  font-family: "Open Sans", "Liberation Sans", sans-serif;
  font-size: 12px; color: #d9dde2; background: #222933;
  position: relative;
}
i, em { font-style: normal; }
svg { display: block; flex: none; }
.defs { position: absolute; width: 0; height: 0; }
.c8 { width: 8px; height: 8px; }
.dim { opacity: .45; }
.i10 { width: 10px; height: 10px; }
.i18 { width: 18px; height: 18px; }
.i20 { width: 18px; height: 18px; }
.i33 { width: 33px; height: 33px; }

/* title bar */
.titlebar { height: 30px; flex: none; display: flex; align-items: center; padding-bottom: 2px; background: #222933; position: relative; }
.progress { position: absolute; left: 563px; top: 0; display: flex; height: 1px; }
.pb { width: 48px; background: #1d6fb8; }
.pw { width: 193px; background: #e8e8e8; }
.quick { width: 457px; flex: none; display: flex; align-items: center; padding-left: 15px; }
.logo { width: 22px; height: 21px; background: #d4145a; color: #fff; font: 700 15px/21px "Liberation Sans", sans-serif; text-align: center; box-shadow: -1px 1px 0 #9c0f44; }
.qa { display: flex; justify-content: center; flex: none; }
.qa-logo { width: 20px; }
.qc { width: 24px; display: flex; justify-content: center; flex: none; }
.qc-r { width: 26px; }
.qa-s { width: 10px; }
.qa-m { width: 20px; }
.plane { width: 20px; height: 18px; margin-left: 1px; }
.share { margin-left: 2px; color: #79c0fa; font-size: 11px; }
.doc { width: 240px; flex: none; font-size: 11.6px; color: #d9dde2; white-space: nowrap; }
.search-arrow { width: 0; height: 0; border-left: 5px solid #d9dde2; border-top: 4px solid transparent; border-bottom: 4px solid transparent; margin-left: 4px; margin-right: 6px; }
.search { width: 178px; height: 20px; flex: none; background: #4a5363; padding-left: 3px; font: italic 11.5px/20px "Open Sans", sans-serif; color: #b5bac2; }
.lens { width: 17px; height: 17px; margin-left: 4px; margin-right: 7px; }
.user { width: 17px; height: 17px; }
.uname { margin-left: 5px; width: 80px; flex: none; font-size: 11.4px; white-space: nowrap; }
.qa-u { width: 14px; }
.cart { width: 15px; height: 15px; margin-left: 8px; }
.alogo { width: 17px; height: 15px; margin-left: 7px; }
.qa-a { width: 14px; margin-left: 1px; }
.vsep { width: 1px; height: 18px; background: #4a5160; margin-left: 6px; }
.help { width: 17px; height: 17px; margin-left: 7px; border-radius: 50%; background: #cfcfcf; color: #555; font: 700 13px/17px "Liberation Sans", sans-serif; text-align: center; }
.qa-h { width: 17px; margin-left: 1px; }
.cloudb { width: 16px; height: 16px; margin-left: 1px; }
.winbtns { display: flex; gap: 34px; margin-left: 83px; }
.w12 { width: 12px; height: 12px; }

/* ribbon tabs */
.tabs { height: 22px; flex: none; display: flex; align-items: flex-end; padding-left: 4px; background: #222933; }
.tab { padding: 0 10px; height: 20px; font-size: 12px; line-height: 20px; color: #b9bec6; white-space: nowrap; letter-spacing: -.03em; }
.tab.on { background: #3b4453; color: #e6e9ec; padding: 0 13px 0 9px; }
.collapse { margin-left: 21px; width: 16px; height: 7px; background: #f0f0f0; display: flex; justify-content: center; margin-bottom: 6px; }
.collapse i { width: 0; height: 0; margin-top: 1px; border-left: 3px solid transparent; border-right: 3px solid transparent; border-bottom: 4px solid #555; }
.tabs > .c8 { margin: 0 0 5px 1px; }

/* ribbon */
.ribbon { height: 99px; flex: none; display: flex; background: #3c4554; }
.panel { display: flex; flex-direction: column; flex: none; border-right: 1px solid #222933; }
.p-model { width: 136px; } .p-mesh { width: 78px; } .p-solid { width: 95px; } .p-draw { width: 94px; }
.p-modify { width: 145px; } .p-section { width: 76px; } .p-coord { width: 145px; } .p-select { width: 172px; border-right: 0; }
.body { height: 79px; flex: none; display: flex; position: relative; }
.plabel { height: 19px; flex: none; display: flex; align-items: center; justify-content: center; gap: 4px; font-size: 11.6px; letter-spacing: -.01em; color: #d0d4da; position: relative; }
.pl-mesh { padding-right: 12px; }
.pl-sect { padding-right: 12px; }
.pl-coord { padding-right: 12px; }
.launch { width: 5px; height: 5px; border-right: 1px solid #cfd2d6; border-bottom: 1px solid #cfd2d6; position: absolute; right: 5px; top: 8px; }
.big { display: flex; flex-direction: column; align-items: center; flex: none; padding-top: 8px; text-align: center; font-size: 11.8px; line-height: 15px; color: #dfe2e6; position: relative; }
.big > span { display: block; margin-top: 3px; }
.ba { margin-top: 1px; }
.b-box { width: 48px; }
.b-ext { width: 58px; }
.col { display: flex; flex-direction: column; padding-top: 5px; }
.p-model .col { margin-left: 1px; }
.s { width: 100%; height: 24px; display: flex; align-items: center; justify-content: center; }
.p-model .s { width: 28px; }
.b-smooth { width: 50px; }
.b-smooth > span { margin-left: 4px; }
.p-mesh .col { width: 24px; margin-left: 1px; }
.grid { display: grid; padding-top: 5px; grid-auto-rows: 24px; align-content: start; }
.g-solid { grid-template-columns: 25px 31px 19px 17px; padding-left: 2px; }
.g-draw { grid-template-columns: 25px 24px 30px 15px; padding-left: 2px; }
.g-modify { grid-template-columns: 26px 28px 23px 31px 21px 10px; padding-left: 1px; }
.g-coord { grid-template-columns: 22px 9px 34px 24px 24px 23px; padding-left: 5px; }
.b-sect { width: 75px; }
.combo { grid-column: 3 / 7; margin-left: 7px; height: 20px; align-self: center; background: #4a5363; border: 1px solid #2b323d; display: flex; align-items: center; gap: 1px; padding: 0 2px 0 3px; font-size: 11.8px; color: #e0e3e7; }
.i18c { width: 18px; height: 18px; }
.carr { margin-left: auto; }
.mini { font: 8px "Liberation Sans", sans-serif; fill: #dfe3e8; }
.big-m { font-size: 10px; fill: #7dbef5; }
.big-b { font-size: 10px; fill: #7dbef5; font-weight: 700; }
.b-cull { width: 45px; height: 72px; margin: 5px 0 0 2px; padding-top: 2px; background: #4d6178; border: 1px solid #79b4e2; }
.b-filter { width: 62px; margin-left: 3px; }
.b-gizmo { width: 60px; }
.gz { position: absolute; right: 2px; top: 56px; }
.slides { flex: 1; display: flex; gap: 2px; padding: 2px 0 1px 0; }
.slide { width: 59px; height: 96px; background: #4c5667; border: 1px solid #2a313c; border-width: 0 1px 1px 1px; display: flex; flex-direction: column; align-items: center; padding-top: 3px; font-size: 11.8px; color: #dfe2e6; position: relative; }
.slide > span { margin-top: 2px; }
.sa { position: absolute; bottom: 3px; left: 25px; }

/* file tabs */
.filetabs { height: 27px; flex: none; display: flex; align-items: center; background: #222933; padding-top: 3px; }
.burger { width: 15px; margin-left: 16px; flex: none; display: flex; flex-direction: column; gap: 3px; }
.burger i { height: 2px; background: #e3e3e3; }
.slash { width: 1px; height: 16px; background: #4b5360; transform: skewX(-20deg); flex: none; margin-left: 14px; }
.ft { margin-left: 12px; width: 27px; font-size: 11.3px; color: #d5d8dc; }
.ft-active { margin-left: 5px; width: 185px; height: 24px; flex: none; display: flex; align-items: center; padding-left: 16px; background: #3c4554; clip-path: polygon(9px 0, 100% 0, calc(100% - 9px) 100%, 0 100%); font-weight: 600; font-size: 12px; color: #eef0f2; letter-spacing: -.01em; white-space: nowrap; }
.ft-active em { margin-left: 9px; font-size: 17px; font-weight: 400; color: #aeb3ba; line-height: 1; }
.plus { font: 400 23px/1 "Liberation Sans", sans-serif; color: #e8e8e8; margin-left: 14px; width: 14px; }
.filetabs .slash:last-child { margin-left: 14px; }
.sep4 { height: 4px; flex: none; background: #3c4554; }
.sep5 { height: 5px; flex: none; background: #3c4554; }

/* viewport */
.viewport { height: 513px; flex: none; position: relative; background: #212830; overflow: hidden; }
.gridlayer {
  position: absolute; left: 0; top: 0; right: 68px; bottom: 0;
  background-image:
    linear-gradient(#333b47 1px, transparent 1px),
    linear-gradient(90deg, #333b47 1px, transparent 1px),
    linear-gradient(#262d37 1px, transparent 1px),
    linear-gradient(90deg, #262d37 1px, transparent 1px);
  background-size: 49.4px 49.4px, 49.4px 49.4px, 9.88px 9.88px, 9.88px 9.88px;
  background-position: 0 30.5px, 9.7px 0, 0 .9px, 9.7px 0;
}
.car { position: absolute; left: 0; top: 0; width: 1366px; height: 513px; fill: none; stroke: #fff; stroke-width: 1; shape-rendering: crispEdges; }
.vplabel { position: absolute; left: 3px; top: 6px; font-size: 11.4px; color: #d5d8dc; white-space: nowrap; }
.vpctl { position: absolute; left: 1305px; top: 10px; display: flex; align-items: center; gap: 8px; }
.vmin { width: 10px; height: 3px; background: #f0f0f0; margin-top: 3px; }
.vmax { width: 10px; height: 9px; border: 2px solid #f0f0f0; border-top-width: 3px; margin-left: 2px; }
.vpctl em { font: 700 11px/1 "Liberation Sans", sans-serif; color: #f0f0f0; margin-left: 2px; }
.cube { position: absolute; left: 1255px; top: 34px; width: 100px; height: 100px; }
.ring { position: absolute; left: 7px; top: 6px; width: 86px; height: 88px; border-radius: 50%; border: 10px solid #4b535d; }
.face { position: absolute; left: 31px; top: 31px; width: 38px; height: 38px; background: #b4b5b5; border: 1px solid #5d6670; display: flex; align-items: center; justify-content: center; }
.inner { width: 24px; height: 24px; background: #a6a7a7; color: #4f5762; font: 700 9.5px/24px "Liberation Sans", sans-serif; text-align: center; }
.d { position: absolute; font: 700 14px/16px "Liberation Sans", sans-serif; color: #bfc1c3; width: 16px; text-align: center; }
.n { left: 42px; top: 2px; } .s-d { left: 42px; top: 83px; } .w { left: 1px; top: 42px; } .e { left: 83px; top: 42px; }
.wcs { position: absolute; left: 1281px; top: 147px; width: 47px; height: 17px; border-radius: 4px; background: #878a99; border: 1px solid #666a7a; display: flex; align-items: center; gap: 4px; padding-left: 4px; font-size: 10.5px; color: #5a5d6d; }
.navbar { position: absolute; left: 1330px; top: 190px; width: 32px; height: 212px; background: #565d65; border-radius: 4px; }
.navsvg { width: 32px; height: 212px; }

/* layout bar */
.layoutbar { height: 28px; flex: none; display: flex; align-items: center; padding-bottom: 6px; background: #222933; position: relative; }
.lt-model { margin-left: 10px; width: 69px; height: 22px; flex: none; padding-left: 17px; background: #3c4554; clip-path: polygon(8px 0, 100% 0, calc(100% - 8px) 100%, 0 100%); font-weight: 700; font-size: 12px; line-height: 22px; color: #f0f0f0; }
.lt { margin-left: 7px; font-size: 11.7px; color: #dfe2e6; }
.layoutbar .slash { margin-left: 11px; }
.lt2 { margin-left: 10px; }
.p2 { margin-left: 13px; }
.status { position: absolute; left: 1151px; top: 1px; width: 187px; height: 24px; padding-left: 3px; background: #3c4554; font-size: 11.5px; line-height: 24px; color: #f0f0f0; white-space: nowrap; }
.b2 { position: absolute; left: 1340px; top: 1px; width: 24px; height: 24px; margin: 0; padding: 6px 4px; background: #3c4554; gap: 2px; }
.hand { position: absolute; left: 1350px; top: -21px; width: 16px; height: 16px; }

/* taskbar */
.taskbar { height: 40px; flex: none; display: flex; align-items: center; background: #4c4b4a; position: relative; }
.start { width: 16px; height: 16px; margin-left: 16px; }
.tsearch { margin-left: 18px; width: 285px; height: 40px; flex: none; display: flex; align-items: center; background: #f1f1f0; border: 1px solid #c9c9c9; border-width: 1px 0; position: relative; color: #333; font-size: 14.2px; }
.tlens { width: 16px; height: 16px; margin-left: 11px; }
.tsearch span { margin-left: 11px; letter-spacing: -.1px; white-space: nowrap; }
.thumb { position: absolute; right: 0; top: 0; width: 73px; height: 38px; }
.tview { width: 17px; height: 17px; margin-left: 17px; }
.tb { width: 49px; height: 40px; flex: none; display: flex; align-items: center; justify-content: center; position: relative; }
.tb1 { margin-left: 18px; }
.t22 { width: 22px; height: 22px; }
.t24 { width: 25px; height: 25px; }
.tb-chrome::after, .tb-acad::after { content: ""; position: absolute; left: 4px; right: 4px; bottom: 0; height: 2px; background: #76b9ed; }
.tb-acad::after { left: 0; right: 0; }
.tb-acad { background: #6c6b6a; width: 47px; }
.avatar { position: absolute; left: 29px; top: 20px; width: 15px; height: 15px; border-radius: 50%; background: #0f4f3a; color: #fff; font: 700 9px/15px "Liberation Sans", sans-serif; text-align: center; }
.acad { width: 21px; height: 26px; background: #c8154f; border-radius: 1px; display: flex; flex-direction: column; align-items: center; color: #fff; box-shadow: 1px 1px 0 #8d0f3a; }
.acad b { font: 700 14px/16px "Liberation Sans", sans-serif; }
.acad small { font: 700 6px/8px "Liberation Sans", sans-serif; background: #7a1238; width: 100%; text-align: center; margin-top: 1px; }
.tray { position: absolute; left: 0; top: 0; width: 100%; height: 40px; pointer-events: none; }
.tray > * { position: absolute; }
.wx { left: 872px; top: 5px; width: 28px; height: 28px; }
.badge { left: 886px; top: 8px; width: 10px; text-align: center; color: #fff; font: 700 8px/10px "Liberation Sans", sans-serif; }
.temp { left: 906px; top: 10px; font-size: 13.5px; line-height: 20px; color: #efefef; }
.cond { left: 944px; top: 10px; font-size: 13.5px; line-height: 20px; color: #efefef; white-space: nowrap; }
.tup { left: 1058px; top: 16px; width: 14px; height: 8px; }
.tbat { left: 1089px; top: 15px; width: 16px; height: 10px; }
.twifi { left: 1123px; top: 13px; width: 14px; height: 14px; }
.tspk { left: 1152px; top: 13px; width: 16px; height: 14px; }
.tring { left: 1185px; top: 12px; width: 14px; height: 16px; }
.tpen { left: 1221px; top: 12px; width: 16px; height: 16px; }
.clock { left: 1246px; top: 3px; width: 70px; text-align: center; font-size: 11px; line-height: 18px; color: #efefef; }
.tnote { left: 1323px; top: 12px; width: 18px; height: 16px; }
.tiptime { position: absolute; left: 1209px; top: -20px; width: 143px; height: 20px; background: rgba(200,200,200,.72); color: #555; font-size: 11px; line-height: 20px; text-align: center; white-space: nowrap; box-shadow: 1px 1px 2px rgba(0,0,0,.4); }
```
